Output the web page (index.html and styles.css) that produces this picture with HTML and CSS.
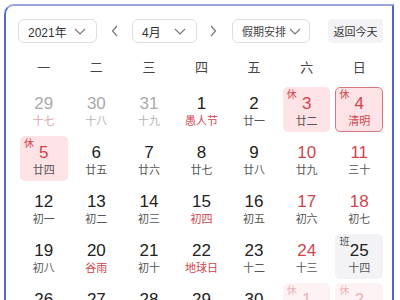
FILE: index.html
```html
<!DOCTYPE html>
<html>
<head>
    <title>万年历</title>
    <link rel="stylesheet" href="styles.css">
</head>
<body>
    <div class="calendar">
        <div class="toolbar">
            <div class="select year-select">
                <span>2021年</span>
                <svg class="chev" width="12" height="7" viewBox="0 0 12 7"><polyline points="1,1 6,6 11,1" /></svg>
            </div>
            <svg class="arrow prev" width="8" height="12" viewBox="0 0 8 12"><polyline points="6,1 1.5,6 6,11" /></svg>
            <div class="select month-select">
                <span>4月</span>
                <svg class="chev" width="12" height="7" viewBox="0 0 12 7"><polyline points="1,1 6,6 11,1" /></svg>
            </div>
            <svg class="arrow next" width="8" height="12" viewBox="0 0 8 12"><polyline points="2,1 6.5,6 2,11" /></svg>
            <div class="select holiday-select">
                <span>假期安排</span>
                <svg class="chev" width="12" height="7" viewBox="0 0 12 7"><polyline points="1,1 6,6 11,1" /></svg>
            </div>
            <button class="today-btn">返回今天</button>
        </div>

        <div class="weekdays">
            <div>一</div><div>二</div><div>三</div><div>四</div><div>五</div><div>六</div><div>日</div>
        </div>

        <div class="days">
            <div class="day other"><div class="num">29</div><div class="lunar faded-red">十七</div></div>
            <div class="day other"><div class="num">30</div><div class="lunar">十八</div></div>
            <div class="day other"><div class="num">31</div><div class="lunar">十九</div></div>
            <div class="day"><div class="num">1</div><div class="lunar fest">愚人节</div></div>
            <div class="day"><div class="num">2</div><div class="lunar">廿一</div></div>
            <div class="day rest"><span class="tag">休</span><div class="num">3</div><div class="lunar">廿二</div></div>
            <div class="day rest today"><span class="tag">休</span><div class="num">4</div><div class="lunar fest">清明</div></div>

            <div class="day rest"><span class="tag">休</span><div class="num">5</div><div class="lunar">廿四</div></div>
            <div class="day"><div class="num">6</div><div class="lunar">廿五</div></div>
            <div class="day"><div class="num">7</div><div class="lunar">廿六</div></div>
            <div class="day"><div class="num">8</div><div class="lunar">廿七</div></div>
            <div class="day"><div class="num">9</div><div class="lunar">廿八</div></div>
            <div class="day weekend"><div class="num">10</div><div class="lunar">廿九</div></div>
            <div class="day weekend"><div class="num">11</div><div class="lunar">三十</div></div>

            <div class="day"><div class="num">12</div><div class="lunar">初一</div></div>
            <div class="day"><div class="num">13</div><div class="lunar">初二</div></div>
            <div class="day"><div class="num">14</div><div class="lunar">初三</div></div>
            <div class="day"><div class="num">15</div><div class="lunar fest">初四</div></div>
            <div class="day"><div class="num">16</div><div class="lunar">初五</div></div>
            <div class="day weekend"><div class="num">17</div><div class="lunar">初六</div></div>
            <div class="day weekend"><div class="num">18</div><div class="lunar">初七</div></div>

            <div class="day"><div class="num">19</div><div class="lunar">初八</div></div>
            <div class="day"><div class="num">20</div><div class="lunar fest">谷雨</div></div>
            <div class="day"><div class="num">21</div><div class="lunar">初十</div></div>
            <div class="day"><div class="num">22</div><div class="lunar fest">地球日</div></div>
            <div class="day"><div class="num">23</div><div class="lunar">十二</div></div>
            <div class="day weekend"><div class="num">24</div><div class="lunar">十三</div></div>
            <div class="day work"><span class="tag">班</span><div class="num">25</div><div class="lunar">十四</div></div>

            <div class="day"><div class="num">26</div><div class="lunar">十五</div></div>
            <div class="day"><div class="num">27</div><div class="lunar">十六</div></div>
            <div class="day"><div class="num">28</div><div class="lunar">十七</div></div>
            <div class="day"><div class="num">29</div><div class="lunar">十八</div></div>
            <div class="day"><div class="num">30</div><div class="lunar">十九</div></div>
            <div class="day rest other"><span class="tag">休</span><div class="num">1</div><div class="lunar">二十</div></div>
            <div class="day rest other"><span class="tag">休</span><div class="num">2</div><div class="lunar">廿一</div></div>
        </div>
    </div>
</body>
</html>
```

FILE: styles.css
```css
body {
    margin: 0;
    background: #fff;
    font-family: "Liberation Sans", "Noto Sans CJK SC", sans-serif;
    color: #222;
}
.calendar {
    margin: 4px 0 0 4px;
    width: 390px;
    height: 320px;
    border: 2px solid #5a6dc6;
    border-top-color: #9aa6da;
    border-right-color: #4d63d8;
    border-top-left-radius: 10px;
    padding: 13px 0 0 12px;
    box-sizing: border-box;
    overflow: hidden;
}
.toolbar {
    display: flex;
    align-items: center;
    height: 24px;
}
.select {
    display: flex;
    align-items: center;
    justify-content: space-between;
    box-sizing: border-box;
    height: 24px;
    padding: 0 10px 0 9px;
    border: 1px solid #dedede;
    border-radius: 6px;
    font-size: 12px;
    color: #333;
    white-space: nowrap;
}
.year-select {
    width: 79px;
}
.month-select {
    width: 65px;
}
.holiday-select {
    width: 78px;
    padding: 0 8px 0 9px;
    font-size: 11px;
    color: #444;
}
.chev polyline,
.arrow polyline {
    fill: none;
    stroke: #777;
    stroke-width: 1.2;
}
.arrow {
    flex: none;
}
.arrow.prev {
    margin: 0 13px 0 14px;
}
.arrow.next {
    margin: 0 15px 0 12px;
}
.today-btn {
    margin-left: 18px;
    height: 24px;
    width: 55px;
    padding: 0;
    border: none;
    border-radius: 4px;
    background: #f3f3f5;
    font-family: inherit;
    font-size: 11px;
    color: #333;
    white-space: nowrap;
}
.weekdays,
.days {
    display: grid;
    grid-template-columns: repeat(7, 1fr);
    column-gap: 5px;
    width: 363px;
    margin-left: 2px;
}
.weekdays {
    margin-top: 17px;
    height: 16px;
    line-height: 16px;
    font-size: 13px;
    color: #444;
    text-align: center;
}
.days {
    margin-top: 11px;
    row-gap: 4px;
}
.day {
    position: relative;
    height: 45px;
    box-sizing: border-box;
    border: 1px solid transparent;
    border-radius: 5px;
    text-align: center;
}
.num {
    margin-top: 6px;
    height: 20px;
    line-height: 20px;
    font-size: 17px;
    color: #222;
}
.lunar {
    height: 14px;
    line-height: 14px;
    font-size: 11px;
    color: #555;
}
.lunar.fest {
    color: #d0454c;
}
.tag {
    position: absolute;
    left: 3px;
    top: 1px;
    font-size: 10px;
    line-height: 12px;
    color: #d0454c;
}
.weekend .num,
.rest .num {
    color: #d0454c;
}
.rest {
    background: #fde3e5;
}
.today {
    border-color: #d9777d;
}
.work {
    background: #f3f3f5;
}
.work .tag {
    color: #555;
}
.other .num {
    color: #aaa;
}
.other .lunar {
    color: #b4b4b4;
}
.other .lunar.faded-red {
    color: #d9a8ab;
}
.rest.other {
    background: #fef3f4;
}
.rest.other .num,
.rest.other .tag {
    color: #eab3b7;
}
.rest.other .lunar {
    color: #ccc;
}
```
